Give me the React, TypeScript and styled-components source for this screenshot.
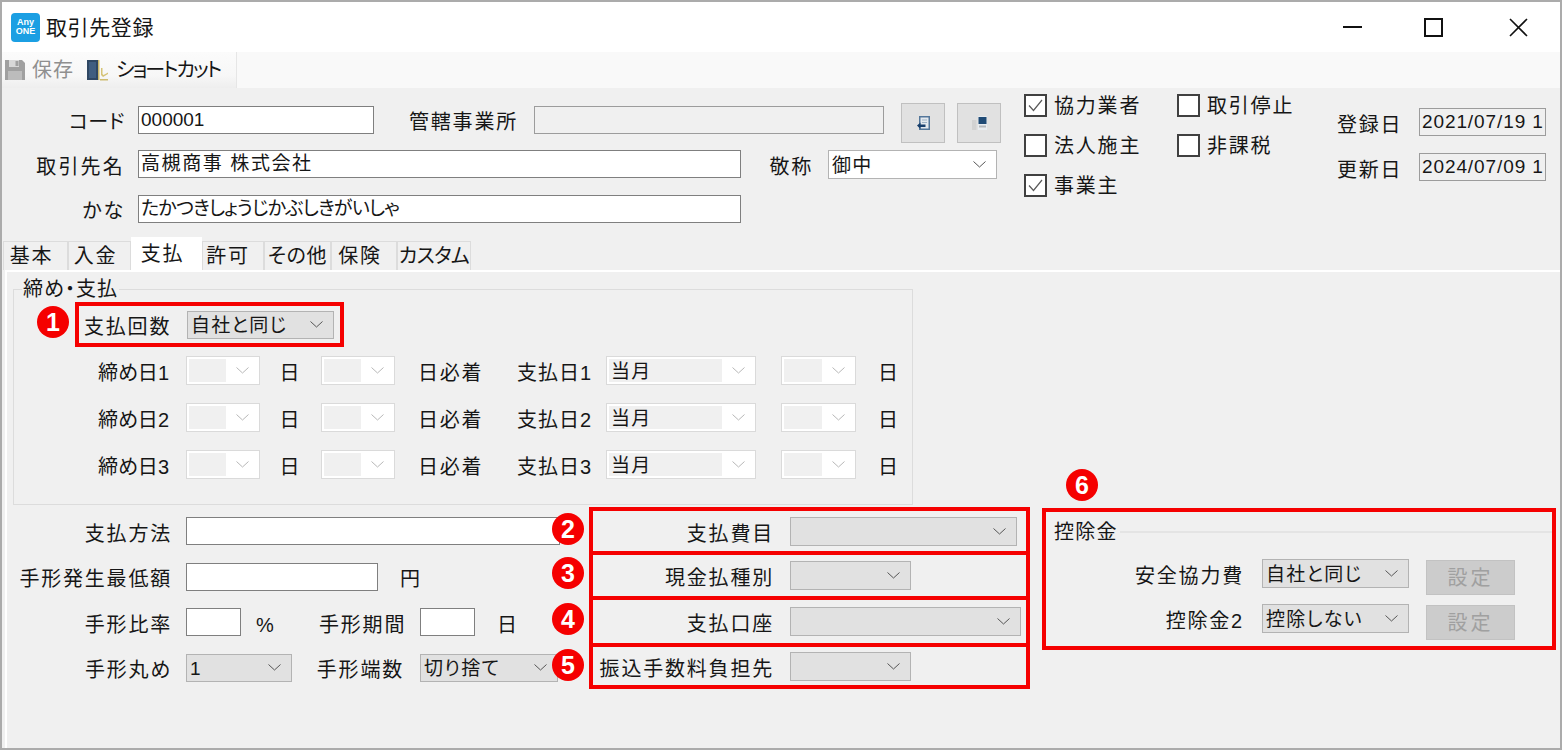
import React from "react";
import styled, { createGlobalStyle } from "styled-components";

const GlobalStyle = createGlobalStyle`
  html, body {
    margin: 0;
    padding: 0;
    background: #fff;
    overflow: hidden;
  }
  * {
    box-sizing: border-box;
  }
`;

const Window = styled.div`
  width: 1562px;
  height: 750px;
  border: 2px solid #ababab;
  background: #f0f0f0;
  color: #161616;
  font-family: "Liberation Sans", "Noto Sans CJK JP", sans-serif;
  font-size: 20px;
  font-feature-settings: "palt";
  letter-spacing: 1.8px;
  line-height: 1;
  overflow: hidden;
`;

/* title bar */
const TitleBar = styled.div`
  height: 50px;
  background: #fff;
  display: flex;
  align-items: center;
  padding-left: 9px;
`;

const AppIcon = styled.div`
  width: 29px;
  height: 29px;
  border-radius: 4px;
  background: #1b9fe3;
  color: #fff;
  font-size: 9px;
  font-weight: 700;
  letter-spacing: 0;
  line-height: 9px;
  text-align: center;
  padding-top: 5px;
  margin-right: 6px;
`;

const Title = styled.span`
  font-size: 21px;
  letter-spacing: 0.6px;
  flex: 1;
`;

const WinButton = styled.div<{ $pad?: number }>`
  width: 83px;
  height: 50px;
  padding-right: ${(p) => p.$pad ?? 0}px;
  display: flex;
  align-items: center;
  justify-content: center;
`;

/* toolbar */
const Toolbar = styled.div`
  height: 36px;
  background: #f9f9f9;
  display: flex;
`;

const ToolStrip = styled.div`
  width: 235px;
  background: linear-gradient(#fbfbfb, #f7f7f7 65%, #eeeeee);
  border-right: 1px solid #e6e6e6;
  display: flex;
  align-items: center;
  padding-left: 3px;
`;

const ToolItem = styled.div<{ $muted?: boolean; $gap: number; $ls: number }>`
  flex: none;
  display: flex;
  align-items: center;
  gap: ${(p) => p.$gap}px;
  margin-right: 13px;
  font-size: 20px;
  letter-spacing: ${(p) => p.$ls}px;
  white-space: nowrap;
  color: ${(p) => (p.$muted ? "#8f8f8f" : "#161616")};
`;

/* header form */
const Header = styled.div`
  height: 149px;
  display: flex;
`;

const HeaderForm = styled.div`
  width: 1022px;
  padding-top: 18px;
  display: flex;
  flex-direction: column;
  gap: 17.5px;
`;

const HeaderRow = styled.div`
  height: 27px;
  display: flex;
  align-items: center;
`;

const Label = styled.span<{ $w: number; $gap?: number; $ls?: number }>`
  flex: none;
  width: ${(p) => p.$w}px;
  margin-right: ${(p) => p.$gap ?? 16}px;
  padding-top: 5px;
  text-align: right;
  white-space: nowrap;
  letter-spacing: ${(p) => p.$ls ?? 1.8}px;
`;

const Field = styled.div<{ $w: number; $h?: number; $flat?: boolean; $ls?: number }>`
  flex: none;
  width: ${(p) => p.$w}px;
  height: ${(p) => p.$h ?? 28}px;
  border: 1px solid ${(p) => (p.$flat ? "#9c9c9c" : "#7f7f7f")};
  background: ${(p) => (p.$flat ? "#f0f0f0" : "#fff")};
  font-size: 19px;
  letter-spacing: ${(p) => p.$ls ?? 0}px;
  line-height: ${(p) => (p.$h ?? 28) - 2}px;
  padding-left: 2px;
  white-space: nowrap;
  overflow: hidden;
`;

const ToolButton = styled.div<{ $gap: number }>`
  flex: none;
  width: 44px;
  height: 40px;
  margin: 7px 0 0 ${(p) => p.$gap}px;
  background: #e1e1e1;
  border: 1.5px solid #c0c0c0;
  display: flex;
  align-items: center;
  justify-content: center;
`;

const Checks = styled.div`
  width: 313px;
  padding-top: 6px;
  display: grid;
  grid-template-columns: 153px 160px;
  grid-auto-rows: 40px;
  align-content: start;
`;

const CheckItem = styled.div`
  display: flex;
  align-items: center;
  gap: 7px;
  height: 22px;
`;

const CheckBox = styled.div`
  flex: none;
  width: 23px;
  height: 23px;
  border: 2px solid #404040;
  background: #fff;
  display: flex;
  align-items: center;
  justify-content: center;
`;

const CheckText = styled.span`
  padding-top: 2px;
`;

const Dates = styled.div`
  padding-top: 20px;
  display: flex;
  flex-direction: column;
  gap: 17px;
`;

const DateRow = styled.div`
  height: 28px;
  display: flex;
  align-items: center;
`;

/* tabs */
const TabStrip = styled.div`
  height: 33px;
  padding-left: 1px;
  display: flex;
  align-items: flex-end;
`;

const Tab = styled.div<{ $w: number; $active?: boolean; $ls?: number; $shift?: number }>`
  width: ${(p) => p.$w}px;
  height: ${(p) => (p.$active ? 33 : 29)}px;
  background: ${(p) => (p.$active ? "#fff" : "#f0f0f0")};
  border: 1px solid #dcdcdc;
  border-width: ${(p) => (p.$active ? "0" : "1px 1px 0 1px")};
  display: flex;
  align-items: center;
  justify-content: center;
  letter-spacing: ${(p) => p.$ls ?? 1.8}px;
  white-space: nowrap;
  padding-right: ${(p) => p.$shift ?? 8}px;
`;

const Pane = styled.div`
  height: 478px;
  margin-left: 3px;
  border-left: 2px solid #fff;
  border-top: 2px solid #fff;
`;

/* group 締め・支払 */
const Group = styled.fieldset`
  width: 900px;
  height: 227px;
  margin: 6px 0 0 6px;
  padding: 2px 0 0 61px;
  border: 1px solid #dcdcdc;
`;

const GroupTitle = styled.legend`
  padding: 0 1px;
  margin-left: -53px;
  height: 22px;
  line-height: 22px;
  letter-spacing: 1px;
`;

const RedBox = styled.div`
  position: relative;
  border: 4px solid #f50000;
`;

const PayCountBox = styled(RedBox)`
  width: 269px;
  height: 45px;
  display: flex;
  align-items: center;
  padding-left: 5px;
`;

const Badge = styled.div<{ $left: number; $top: number }>`
  position: absolute;
  z-index: 2;
  left: ${(p) => p.$left}px;
  top: ${(p) => p.$top}px;
  width: 32px;
  height: 32px;
  border-radius: 50%;
  background: #f50000;
  color: #fff;
  font-family: "Liberation Sans", sans-serif;
  font-size: 25px;
  font-weight: 700;
  letter-spacing: 0;
  line-height: 32px;
  text-align: center;
`;

const ClosingGrid = styled.div`
  margin: 9px 0 0 -61px;
  display: grid;
  grid-template-columns: 172px 74px 61px 74px 122px 89px 150px 25px 75px auto;
  grid-auto-rows: 29px;
  row-gap: 18px;
  align-items: center;
`;

const GridLabel = styled.span<{ $pad?: number; $center?: boolean; $right?: number; $ls?: number }>`
  white-space: nowrap;
  text-align: ${(p) => (p.$center ? "center" : p.$right !== undefined ? "right" : "left")};
  padding-left: ${(p) => p.$pad ?? 0}px;
  padding-right: ${(p) => p.$right ?? 0}px;
  padding-top: 5px;
  letter-spacing: ${(p) => p.$ls ?? 1.8}px;
`;

/* combos */
const Combo = styled.div<{ $w?: number; $h?: number; $white?: boolean; $off?: boolean }>`
  flex: none;
  width: ${(p) => (p.$w ? `${p.$w}px` : "auto")};
  height: ${(p) => p.$h ?? 29}px;
  background: ${(p) => (p.$white || p.$off ? "#fff" : "#e1e1e1")};
  border: ${(p) => (p.$off ? "1px solid #dadada" : "1.5px solid #b3b3b3")};
  display: flex;
  align-items: center;
  font-size: 19px;
  letter-spacing: 1.2px;
  white-space: nowrap;
`;

const ComboText = styled.div<{ $off?: boolean }>`
  flex: 1;
  align-self: stretch;
  margin: ${(p) => (p.$off ? "2px 0 2px 2px" : "0")};
  padding: 2px 0 0 ${(p) => (p.$off ? 2 : 3)}px;
  background: ${(p) => (p.$off ? "#f0f0f0" : "transparent")};
  display: flex;
  align-items: center;
  overflow: hidden;
`;

const ComboArrow = styled.div`
  flex: none;
  width: 33px;
  display: flex;
  align-items: center;
  justify-content: center;
`;

const Chevron = ({ off }: { off?: boolean }) => (
  <svg width="13" height="7" viewBox="0 0 13 7">
    <polyline
      points="0.500,0.500 6.500,6 12.500,0.500"
      fill="none"
      stroke={off ? "#b8b8b8" : "#555"}
      strokeWidth="1"
    />
  </svg>
);

const Select = ({
  w,
  h,
  white,
  off,
  children,
}: {
  w: number;
  h?: number;
  white?: boolean;
  off?: boolean;
  children?: React.ReactNode;
}) => (
  <Combo $w={w} $h={h} $white={white} $off={off}>
    <ComboText $off={off}>{children}</ComboText>
    <ComboArrow>
      <Chevron off={off} />
    </ComboArrow>
  </Combo>
);

/* lower part */
const Lower = styled.div`
  display: flex;
`;

const PayForm = styled.div`
  width: 582px;
  padding-top: 12px;
  display: flex;
  flex-direction: column;
  gap: 17.5px;
`;

const PayRow = styled.div`
  height: 28px;
  display: flex;
  align-items: center;
`;

const Unit = styled.span<{ $w?: number; $pad: number }>`
  flex: none;
  width: ${(p) => (p.$w ? `${p.$w}px` : "auto")};
  padding: 5px 0 0 ${(p) => p.$pad}px;
`;

const NoteColumn = styled.div`
  width: 441px;
  padding-top: 2px;
  display: flex;
  flex-direction: column;
`;

const NoteBox = styled(RedBox)<{ $h: number }>`
  height: ${(p) => p.$h}px;
  display: flex;
  align-items: center;
  & + & {
    margin-top: -4px;
  }
`;

const DeductBox = styled(RedBox)`
  width: 514px;
  height: 142px;
  margin: 3px 0 0 12px;
  padding: 9px 0 0 8px;
`;

const DeductHead = styled.div`
  height: 22px;
  display: flex;
  align-items: center;
  gap: 2px;
  letter-spacing: 1.3px;
  &::after {
    content: "";
    flex: 1;
    height: 1.5px;
    background: #e4e4e4;
  }
`;

const DeductRow = styled.div`
  height: 29px;
  margin-top: 16px;
  display: flex;
  align-items: flex-start;
  & + & {
    margin-top: 16px;
  }
`;

const DeductLabel = styled(Label)`
  padding-top: 0;
  line-height: 34px;
`;

const SetButton = styled.div`
  flex: none;
  width: 89px;
  height: 35px;
  margin: 1px 0 0 17px;
  background: #cccccc;
  border: 1px solid #c2c2c2;
  color: #a0a0a0;
  letter-spacing: 3px;
  display: flex;
  align-items: center;
  justify-content: center;
`;

/* drawings */
const Floppy = () => (
  <svg width="20" height="20" viewBox="0 0 20 20">
    <path d="M0 0h17l3 3v17H0z" fill="#a0a0a0" />
    <path d="M4 0h10v7H4z" fill="#d8d8d8" />
    <path d="M10.500 1h3v5h-3z" fill="#a0a0a0" />
    <path d="M3 11h14v9H3z" fill="#bcbcbc" />
  </svg>
);

const DoorIcon = () => (
  <svg width="22" height="22" viewBox="0 0 22 22">
    <path d="M0 1h11v20H0z" fill="#2f4763" />
    <path d="M2 3h7v16H2z" fill="#3f5d80" />
    <path d="M11 1h1.500v20H11z" fill="#c8b568" />
    <path d="M13 20h8v1.500h-8z" fill="#cdbb6e" />
    <path d="M14 9v7l2 2 5-3v-1.500l-4.500 2.500-1-1V9z" fill="#d5c377" />
  </svg>
);

const ImportIcon = () => (
  <svg width="13" height="14" viewBox="0 0 13 14">
    <path d="M2 0h11v14H2z" fill="#54779a" />
    <path d="M3.500 1.500h8v11h-8z" fill="#e4e9ee" />
    <path d="M5 4h5M5 6.500h5" stroke="#9fb3c6" />
    <path d="M0 9.500l3.500-3v2h5v2.500h-5v2z" fill="#173f6c" />
  </svg>
);

const PrinterIcon = () => (
  <svg width="15" height="14" viewBox="0 0 15 14">
    <path d="M0 4h4.500v10H0z" fill="#d2d2d2" />
    <path d="M6 1q0-1 1-1h7q1 0 1 1v13H6z" fill="#e8ecf0" />
    <path d="M6.500 1h8v7h-8z" fill="#1f4a75" />
    <path d="M7 9.500h7v2H7z" fill="#b4b8bc" />
  </svg>
);

const CheckMark = () => (
  <svg width="15" height="13" viewBox="0 0 15 13">
    <polyline points="1,6.500 5.500,11.500 14,1" fill="none" stroke="#5a5a5a" strokeWidth="1.2" />
  </svg>
);

const Check = ({ checked, label }: { checked?: boolean; label: string }) => (
  <CheckItem>
    <CheckBox>{checked && <CheckMark />}</CheckBox>
    <CheckText>{label}</CheckText>
  </CheckItem>
);

const closingRows = ["1", "2", "3"];

export default function App() {
  return (
    <>
      <GlobalStyle />
      <Window>
        <TitleBar>
          <AppIcon>
            Any
            <br />
            ONE
          </AppIcon>
          <Title>取引先登録</Title>
          <WinButton>
            <svg width="19" height="2" viewBox="0 0 19 2">
              <path d="M0 1h19" stroke="#111" strokeWidth="2" />
            </svg>
          </WinButton>
          <WinButton $pad={4}>
            <svg width="19" height="19" viewBox="0 0 19 19">
              <path d="M1 1h17v17H1z" fill="none" stroke="#111" strokeWidth="2" />
            </svg>
          </WinButton>
          <WinButton>
            <svg width="19" height="19" viewBox="0 0 19 19">
              <path d="M1 1l17 17M18 1L1 18" stroke="#111" strokeWidth="1.6" />
            </svg>
          </WinButton>
        </TitleBar>

        <Toolbar>
          <ToolStrip>
            <ToolItem $muted $gap={7} $ls={1}>
              <Floppy />
              保存
            </ToolItem>
            <ToolItem $gap={7} $ls={-2}>
              <DoorIcon />
              ショートカット
            </ToolItem>
          </ToolStrip>
        </Toolbar>

        <Header>
          <HeaderForm>
            <HeaderRow>
              <Label $w={123} $gap={13} $ls={0.5}>
                コード
              </Label>
              <Field $w={236}>000001</Field>
              <Label $w={144} $gap={16}>
                管轄事業所
              </Label>
              <Field $w={350} $flat />
              <ToolButton $gap={17}>
                <ImportIcon />
              </ToolButton>
              <ToolButton $gap={12}>
                <PrinterIcon />
              </ToolButton>
            </HeaderRow>
            <HeaderRow>
              <Label $w={123} $gap={13} $ls={2.2}>
                取引先名
              </Label>
              <Field $w={603} $ls={1.6}>
                高槻商事 株式会社
              </Field>
              <Label $w={72} $gap={15}>
                敬称
              </Label>
              <Select w={169} white>
                御中
              </Select>
            </HeaderRow>
            <HeaderRow>
              <Label $w={123} $gap={13}>
                かな
              </Label>
              <Field $w={603} $ls={-0.75}>
                たかつきしょうじかぶしきがいしゃ
              </Field>
            </HeaderRow>
          </HeaderForm>

          <Checks>
            <Check checked label="協力業者" />
            <Check label="取引停止" />
            <Check label="法人施主" />
            <Check label="非課税" />
            <Check checked label="事業主" />
          </Checks>

          <Dates>
            <DateRow>
              <Label $w={62} $gap={20}>
                登録日
              </Label>
              <Field $w={127} $flat $ls={0.9}>
                2021/07/19 1
              </Field>
            </DateRow>
            <DateRow>
              <Label $w={62} $gap={20}>
                更新日
              </Label>
              <Field $w={127} $flat $ls={0.9}>
                2024/07/09 1
              </Field>
            </DateRow>
          </Dates>
        </Header>

        <TabStrip>
          <Tab $w={65}>基本</Tab>
          <Tab $w={63}>入金</Tab>
          <Tab $w={71} $active>
            支払
          </Tab>
          <Tab $w={62} $shift={10}>
            許可
          </Tab>
          <Tab $w={67} $shift={0} $ls={0.6}>
            その他
          </Tab>
          <Tab $w={66} $shift={8}>
            保険
          </Tab>
          <Tab $w={74} $shift={0} $ls={-0.6}>
            カスタム
          </Tab>
        </TabStrip>

        <Pane>
          <Group>
            <GroupTitle>締め・支払</GroupTitle>
            <PayCountBox>
              <Badge $left={-42} $top={0}>
                1
              </Badge>
              <Label $w={87}>支払回数</Label>
              <Select w={147} h={28}>
                自社と同じ
              </Select>
            </PayCountBox>
            <ClosingGrid>
              {closingRows.map((n) => (
                <React.Fragment key={n}>
                  <GridLabel $right={17} $ls={0}>
                    締め日{n}
                  </GridLabel>
                  <Select w={74} off />
                  <GridLabel $center>日</GridLabel>
                  <Select w={74} off />
                  <GridLabel $pad={23}>日必着</GridLabel>
                  <GridLabel $ls={1}>支払日{n}</GridLabel>
                  <Select w={150} off>
                    当月
                  </Select>
                  <span />
                  <Select w={75} off />
                  <GridLabel $pad={22}>日</GridLabel>
                </React.Fragment>
              ))}
            </ClosingGrid>
          </Group>

          <Lower>
            <PayForm>
              <PayRow>
                <Label $w={165} $gap={14}>
                  支払方法
                </Label>
                <Field $w={374} />
              </PayRow>
              <PayRow>
                <Label $w={165} $gap={14}>
                  手形発生最低額
                </Label>
                <Field $w={192} />
                <Unit $pad={22}>円</Unit>
              </PayRow>
              <PayRow>
                <Label $w={165} $gap={14}>
                  手形比率
                </Label>
                <Field $w={55} />
                <Unit $w={78} $pad={15}>
                  %
                </Unit>
                <Label $w={85}>手形期間</Label>
                <Field $w={55} />
                <Unit $pad={22}>日</Unit>
              </PayRow>
              <PayRow>
                <Label $w={165} $gap={14}>
                  手形丸め
                </Label>
                <Select w={106} h={28}>
                  1
                </Select>
                <Label $w={112}>手形端数</Label>
                <Select w={138} h={28}>
                  切り捨て
                </Select>
              </PayRow>
            </PayForm>

            <NoteColumn>
              <NoteBox $h={48}>
                <Badge $left={-41} $top={2}>
                  2
                </Badge>
                <Label $w={181} $gap={16}>
                  支払費目
                </Label>
                <Select w={227} />
              </NoteBox>
              <NoteBox $h={49}>
                <Badge $left={-41} $top={2}>
                  3
                </Badge>
                <Label $w={181} $gap={16}>
                  現金払種別
                </Label>
                <Select w={121} />
              </NoteBox>
              <NoteBox $h={51}>
                <Badge $left={-41} $top={3}>
                  4
                </Badge>
                <Label $w={181} $gap={16}>
                  支払口座
                </Label>
                <Select w={231} />
              </NoteBox>
              <NoteBox $h={46}>
                <Badge $left={-41} $top={2}>
                  5
                </Badge>
                <Label $w={181} $gap={16}>
                  振込手数料負担先
                </Label>
                <Select w={121} />
              </NoteBox>
            </NoteColumn>

            <DeductBox>
              <Badge $left={20} $top={-43}>
                6
              </Badge>
              <DeductHead>控除金</DeductHead>
              <DeductRow>
                <DeductLabel $w={190} $gap={18}>
                  安全協力費
                </DeductLabel>
                <Select w={147}>自社と同じ</Select>
                <SetButton>設定</SetButton>
              </DeductRow>
              <DeductRow>
                <DeductLabel $w={190} $gap={18}>
                  控除金2
                </DeductLabel>
                <Select w={147}>控除しない</Select>
                <SetButton>設定</SetButton>
              </DeductRow>
            </DeductBox>
          </Lower>
        </Pane>
      </Window>
    </>
  );
}
